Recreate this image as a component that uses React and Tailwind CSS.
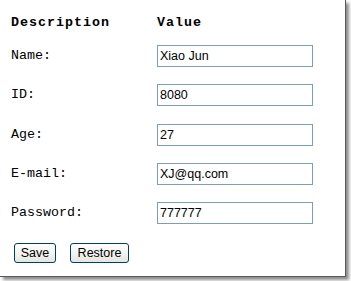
const rows = [
  { label: 'Name:', value: 'Xiao Jun' },
  { label: 'ID:', value: '8080' },
  { label: 'Age:', value: '27' },
  { label: 'E-mail:', value: 'XJ@qq.com' },
  { label: 'Password:', value: '777777' },
];

const mono = { fontFamily: '"Liberation Mono", "DejaVu Sans Mono", monospace' };

export default function App() {
  return (
    <div className="w-[351px] h-[281px] bg-white">
      <div
        className="w-[346px] h-[277px] bg-white border-r border-b border-[#5a5a5a] shadow-[3px_3px_3px_rgba(0,0,0,0.45)] pl-[11px] text-black"
        style={mono}
      >
        <div className="h-[45px] grid grid-cols-[146px_156px] items-center text-[13.33px] font-bold tracking-[1px]">
          <span>Description</span>
          <span>Value</span>
        </div>

        {rows.map((r) => (
          <div key={r.label} className="h-[39.25px] grid grid-cols-[146px_156px] items-start">
            <span className="text-[13.33px] leading-[22px]">{r.label}</span>
            <input
              readOnly
              value={r.value}
              className="h-[22px] w-[156px] border border-[#7f9db9] px-[2px] text-[12.5px] outline-none"
              style={{ fontFamily: '"Liberation Sans", Arial, sans-serif' }}
            />
          </div>
        ))}

        <div
          className="flex gap-[14px] pl-[3px] mt-[2px]"
          style={{ fontFamily: '"Liberation Sans", Arial, sans-serif' }}
        >
          <button className="h-[20px] w-[42px] rounded-[3px] border border-[#003c74] bg-linear-to-b from-white to-[#e6e6e0] text-[12.5px] leading-none">
            Save
          </button>
          <button className="h-[20px] w-[59px] rounded-[3px] border border-[#003c74] bg-linear-to-b from-white to-[#e6e6e0] text-[12.5px] leading-none">
            Restore
          </button>
        </div>
      </div>
    </div>
  );
}
